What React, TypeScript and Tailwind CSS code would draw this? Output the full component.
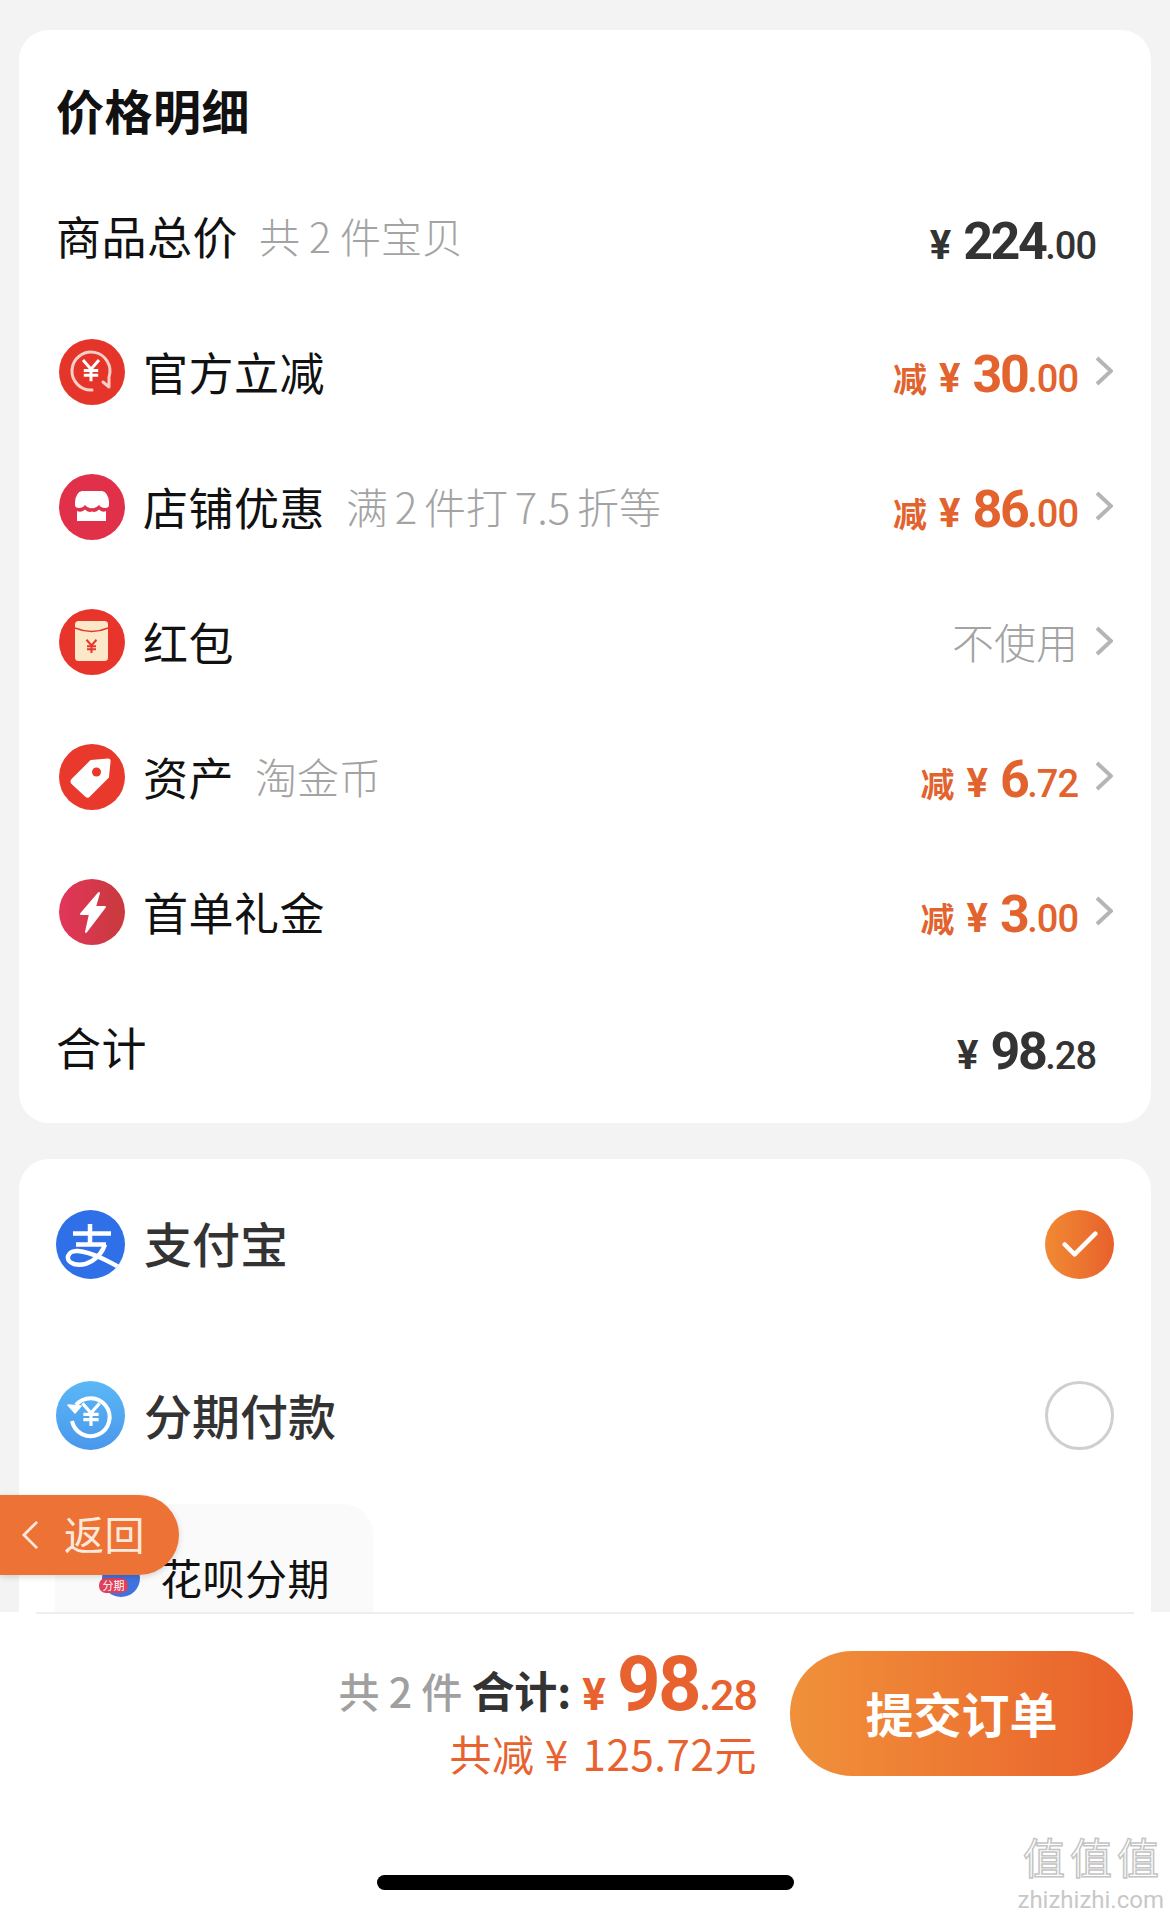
import React from 'react';

const cjk = "font-['Noto_Sans_CJK_SC','Noto_Sans',sans-serif]";
const num = "font-['Roboto','Liberation_Sans',sans-serif]";

const Yen: React.FC<{ cx: number; cy: number; s: number; color: string; w?: number }> = ({ cx, cy, s, color, w = 2.6 }) => (
    <path
        d={`M${cx - s} ${cy - s * 1.25}L${cx} ${cy - s * 0.1}L${cx + s} ${cy - s * 1.25}M${cx} ${cy - s * 0.1}V${cy + s * 1.4}M${cx - s * 0.9} ${cy + s * 0.05}H${cx + s * 0.9}M${cx - s * 0.9} ${cy + s * 0.65}H${cx + s * 0.9}`}
        stroke={color}
        strokeWidth={w}
        fill="none"
    />
);

const OfficialIcon = () => (
    <svg viewBox="0 0 66 66" className="w-[66px] h-[66px]">
        <circle cx="33" cy="33" r="33" fill="#e5352b" />
        <path d="M33 51A19 19 0 1 1 50 38L50 48L44 43" stroke="#f9cfc6" strokeWidth="3" fill="none" strokeLinejoin="round" strokeLinecap="round" />
        <Yen cx={32} cy={31} s={8} color="#ffffff" w={3} />
    </svg>
);

const StoreIcon = () => (
    <svg viewBox="0 0 66 66" className="w-[66px] h-[66px]">
        <circle cx="33" cy="33" r="33" fill="#e0304a" />
        <path d="M23 17H43Q49 18 50 28V31Q50 34 46 34Q42 34 40 31Q36.500 35 33 34Q29 35 26 31Q24 34 20 34Q16 34 16 31V28Q17 18 23 17Z" fill="#ffffff" />
        <path d="M18 37Q22 39 26 35.500Q29 39 33 37.500Q37 39 40 35.500Q44 39 47 37V47H18Z" fill="#ffffff" />
    </svg>
);

const RedPacketIcon = () => (
    <svg viewBox="0 0 66 66" className="w-[66px] h-[66px]">
        <circle cx="33" cy="33" r="33" fill="#e8352b" />
        <rect x="16" y="12" width="33" height="40" rx="3.500" fill="#fbe8c8" />
        <path d="M16 19Q33 26 49 19" stroke="#e8352b" strokeWidth="1.400" fill="none" />
        <Yen cx={32.500} cy={37} s={5} color="#e8352b" w={2} />
    </svg>
);

const TagIcon = () => (
    <svg viewBox="0 0 66 66" className="w-[66px] h-[66px]">
        <circle cx="33" cy="33" r="33" fill="#e8392c" />
        <path d="M32 17L49 15.500Q51 15.500 50.500 18L49 33L30 52Q29 53.500 27 52L13 39Q12 37.500 13 36Z" fill="#ffffff" stroke="#ffffff" strokeWidth="2" strokeLinejoin="round" />
        <circle cx="37.500" cy="28" r="4.500" fill="#e8392c" />
    </svg>
);

const BoltIcon = () => (
    <svg viewBox="0 0 66 66" className="w-[66px] h-[66px]">
        <defs>
            <linearGradient id="bolt" x1="0" y1="0" x2="1" y2="0">
                <stop offset="0" stopColor="#e2365a" />
                <stop offset="1" stopColor="#c83a3c" />
            </linearGradient>
        </defs>
        <circle cx="33" cy="33" r="33" fill="url(#bolt)" />
        <path d="M40 14L22 35H31L27 53L46 28H36Z" fill="#ffffff" stroke="#ffffff" strokeWidth="2" strokeLinejoin="round" />
    </svg>
);

const AlipayIcon = () => (
    <svg viewBox="0 0 69 69" className="w-[69px] h-[69px]">
        <defs>
            <clipPath id="alipay-clip">
                <circle cx="34.500" cy="34.500" r="34.500" />
            </clipPath>
        </defs>
        <circle cx="34.500" cy="34.500" r="34.500" fill="#2f70e9" />
        <g clipPath="url(#alipay-clip)" fill="none" stroke="#ffffff" strokeWidth="4.500">
            <path d="M34 14V33M17 23.500H55M20 34.500H50" />
            <path d="M49 34.500C44 49 30 57 18 54C8 51 11 40 22 41C36 42 54 52 70 61" />
        </g>
    </svg>
);

const InstalmentIcon = () => (
    <svg viewBox="0 0 69 69" className="w-[69px] h-[69px]">
        <defs>
            <linearGradient id="instal" x1="0" y1="0" x2="0" y2="1">
                <stop offset="0" stopColor="#5ab8f6" />
                <stop offset="1" stopColor="#4a97ec" />
            </linearGradient>
        </defs>
        <circle cx="34.500" cy="34.500" r="34.500" fill="url(#instal)" />
        <path d="M20 24A19 19 0 1 1 16 40" stroke="#ffffff" strokeWidth="4" fill="none" />
        <path d="M12 24L19 32L25 25Z" fill="#ffffff" stroke="#ffffff" strokeWidth="1.500" strokeLinejoin="round" />
        <Yen cx={35} cy={33} s={8.500} color="#ffffff" w={3.200} />
    </svg>
);

const Chevron = () => (
    <svg viewBox="0 0 18 30" className="w-[18px] h-[30px] ml-[17px] -mt-[2px]">
        <path d="M2 2L16 15L2 28" stroke="#b5b5b5" strokeWidth="4" fill="none" />
    </svg>
);

type PriceProps = { prefix?: string; whole: string; cents: string; color: string };

const Price: React.FC<PriceProps> = ({ prefix, whole, cents, color }) => (
    <div className={`flex items-baseline ${color}`}>
        {prefix && <span className={`${cjk} text-[34px] font-bold mr-[12px]`}>{prefix}</span>}
        <span className={`${num} text-[40px] font-bold mr-[12px]`}>¥</span>
        <span className={`${num} text-[52px] leading-[60px] font-bold tracking-[-2.500px]`}>{whole}</span>
        <span className={`${num} text-[38px] font-medium tracking-[-1px]`}>.{cents}</span>
    </div>
);

type FeeRow = {
    label: string;
    note?: string;
    icon: React.ReactNode;
    whole?: string;
    cents?: string;
    plain?: string;
};

const rows: FeeRow[] = [
    { label: '官方立减', icon: <OfficialIcon />, whole: '30', cents: '00' },
    { label: '店铺优惠', note: '满 2 件打 7.5 折等', icon: <StoreIcon />, whole: '86', cents: '00' },
    { label: '红包', icon: <RedPacketIcon />, plain: '不使用' },
    { label: '资产', note: '淘金币', icon: <TagIcon />, whole: '6', cents: '72' },
    { label: '首单礼金', icon: <BoltIcon />, whole: '3', cents: '00' },
];

const App: React.FC = () => {
    return (
        <div className={`${cjk} relative flex flex-col w-[1170px] h-[1915px] overflow-hidden bg-[#f3f3f3]`}>
            <main className="h-[1612px] overflow-hidden pt-[30px] px-[19px]">
                <section className="bg-white rounded-[30px] pb-[9px]">
                    <h2 className="h-[139px] pt-[19px] pl-[37px] flex items-center text-[48px] tracking-[0.500px] font-bold text-[#111]">价格明细</h2>
                    <div className="h-[135px] flex items-center justify-between pl-[37px] pr-[55px]">
                        <div className="flex items-center gap-[21px] pb-[2px]">
                            <span className="text-[45px] tracking-[0.500px] text-[#111]">商品总价</span>
                            <span className="text-[41px] text-[#a3a3a3] font-light">共 2 件宝贝</span>
                        </div>
                        <div className="pt-[14px]">
                            <Price whole="224" cents="00" color="text-[#333]" />
                        </div>
                    </div>
                    {rows.map((row) => (
                        <div key={row.label} className="h-[135px] flex items-center justify-between pl-[40px] pr-[38px]">
                            <div className="flex items-center">
                                {row.icon}
                                <span className="ml-[18px] text-[45px] tracking-[0.500px] text-[#111]">{row.label}</span>
                                {row.note && <span className="ml-[21px] pb-[2px] text-[42px] text-[#a3a3a3] font-light [word-spacing:-2.500px]">{row.note}</span>}
                            </div>
                            <div className="flex items-center">
                                {row.plain ? (
                                    <span className="pb-[2px] text-[42px] text-[#a3a3a3] font-light">{row.plain}</span>
                                ) : (
                                    <div className="pt-[10px]">
                                        <Price prefix="减" whole={row.whole ?? ''} cents={row.cents ?? ''} color="text-[#e2632e]" />
                                    </div>
                                )}
                                <Chevron />
                            </div>
                        </div>
                    ))}
                    <div className="h-[135px] flex items-center justify-between pl-[37px] pr-[55px]">
                        <span className="text-[45px] tracking-[0.500px] text-[#111]">合计</span>
                        <div className="pt-[14px]">
                            <Price whole="98" cents="28" color="text-[#333]" />
                        </div>
                    </div>
                </section>

                <section className="mt-[36px] bg-white rounded-t-[30px] h-[600px]">
                    <div className="h-[170px] flex items-center justify-between pl-[37px] pr-[37px]">
                        <div className="flex items-center gap-[19px]">
                            <AlipayIcon />
                            <span className="text-[48px] font-medium text-[#333] pb-[4px]">支付宝</span>
                        </div>
                        <div className="w-[69px] h-[69px] rounded-full bg-gradient-to-r from-[#f08a33] to-[#e8602c] flex items-center justify-center">
                            <svg viewBox="0 0 40 30" className="w-[36px] h-[27px]">
                                <path d="M3 15L14 26L37 3" stroke="#fff" strokeWidth="5" strokeLinecap="round" strokeLinejoin="round" fill="none" />
                            </svg>
                        </div>
                    </div>
                    <div className="h-[172px] flex items-center justify-between pl-[37px] pr-[37px]">
                        <div className="flex items-center gap-[19px]">
                            <InstalmentIcon />
                            <span className="text-[48px] font-medium text-[#333] pb-[2px]">分期付款</span>
                        </div>
                        <div className="w-[69px] h-[69px] rounded-full border-[3px] border-[#cfcfcf]" />
                    </div>
                    <div className="mt-[3px] ml-[36px] w-[318px] h-[200px] rounded-[30px] bg-[#fafafa] flex items-start pt-[48px] pl-[45px]">
                        <div className="relative w-[40px] h-[40px] mt-[7px] shrink-0">
                            <div className="absolute right-0 top-0 w-[38px] h-[38px] rounded-full bg-[#3f73e0]" />
                            <div className="absolute -left-[1px] top-[19px] w-[29px] h-[15px] rounded-[7px] bg-[#e0405a] text-[11px] leading-[15px] text-center text-white">分期</div>
                        </div>
                        <span className="ml-[20px] text-[42px] leading-[50px] tracking-[0.500px] text-[#111] whitespace-nowrap">花呗分期</span>
                    </div>
                </section>
            </main>

            <div className="absolute left-0 top-[1495px] w-[179px] h-[80px] rounded-r-[40px] bg-[#ec7235] shadow-[0_2px_6px_rgba(0,0,0,0.15)] flex items-center pl-[21px] text-[#fde9dc]">
                <svg viewBox="0 0 20 32" className="w-[19px] h-[30px]">
                    <path d="M17 2L3 16L17 30" stroke="#fde9dc" strokeWidth="3" fill="none" />
                </svg>
                <span className="ml-[24px] pb-[5px] text-[40px] leading-none tracking-[0.500px]">返回</span>
            </div>

            <footer className="h-[303px] bg-white px-[36px]">
                <div className="border-t-2 border-[#eeeeee] flex flex-col h-full">
                    <div className="flex items-start justify-end pt-[35px] pr-[1px]">
                        <div className="flex flex-col items-end">
                            <div className="flex items-baseline h-[79px]">
                                <span className="-translate-y-[2px] text-[41px] font-medium text-[#a0a0a0]">共 2 件</span>
                                <span className="-translate-y-[2px] ml-[9px] text-[43px] font-bold text-[#333]">合计:</span>
                                <span className={`${num} ml-[11px] text-[44px] font-bold text-[#e8622f]`}>¥</span>
                                <span className={`${num} ml-[11px] text-[76px] leading-[70px] font-bold text-[#e8622f] tracking-[-2.500px]`}>98</span>
                                <span className={`${num} text-[43px] font-medium text-[#e8622f] tracking-[-1px]`}>.28</span>
                            </div>
                            <div className="text-[42px] leading-[50px] tracking-[0.600px] text-[#e8622f] whitespace-nowrap">共减 ¥ <span className="ml-[4px]">125.72元</span></div>
                        </div>
                        <button className="mt-[2px] ml-[33px] pb-[4px] w-[343px] h-[125px] rounded-full bg-gradient-to-r from-[#f0913a] to-[#e95f2b] text-[48px] font-bold text-white">提交订单</button>
                    </div>
                    <div className="self-center mt-[97px] w-[417px] h-[15px] rounded-full bg-black" />
                </div>
            </footer>

            <div className="absolute right-[6px] top-[1825px] w-[150px] text-right select-none">
                <div className="h-[61px] text-[42px] leading-[61px] tracking-[5px] text-white [-webkit-text-stroke:1.500px_#c4c4c4] whitespace-nowrap">值值值</div>
                <div className={`${num} h-[28px] text-[24px] leading-[28px] text-[#c8c8c8] whitespace-nowrap`}>zhizhizhi.com</div>
            </div>
        </div>
    );
};

export default App;
